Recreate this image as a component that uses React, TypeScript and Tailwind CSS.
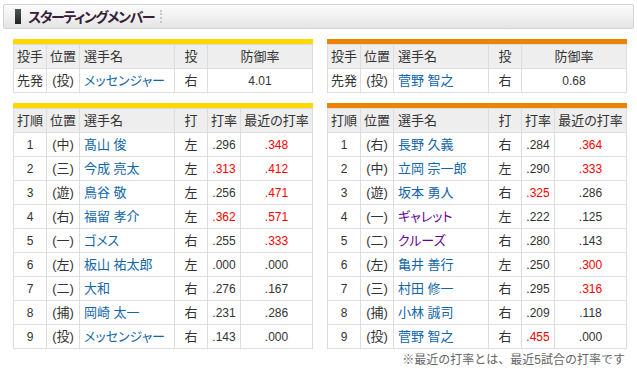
import React from "react";

interface Batter {
  order: number;
  pos: string;
  name: string;
  hand: string;
  avg: string;
  recent: string;
  avgHot?: boolean;
  recentHot?: boolean;
  foreign?: boolean;
}

interface Pitcher {
  pos: string;
  name: string;
  hand: string;
  era: string;
}

const left: Batter[] = [
  { order: 1, pos: "(中)", name: "髙山 俊", hand: "左", avg: ".296", recent: ".348", recentHot: true },
  { order: 2, pos: "(三)", name: "今成 亮太", hand: "左", avg: ".313", recent: ".412", avgHot: true, recentHot: true },
  { order: 3, pos: "(遊)", name: "鳥谷 敬", hand: "左", avg: ".256", recent: ".471", recentHot: true },
  { order: 4, pos: "(右)", name: "福留 孝介", hand: "左", avg: ".362", recent: ".571", avgHot: true, recentHot: true },
  { order: 5, pos: "(一)", name: "ゴメス", hand: "右", avg: ".255", recent: ".333", recentHot: true },
  { order: 6, pos: "(左)", name: "板山 祐太郎", hand: "左", avg: ".000", recent: ".000" },
  { order: 7, pos: "(二)", name: "大和", hand: "右", avg: ".276", recent: ".167" },
  { order: 8, pos: "(捕)", name: "岡崎 太一", hand: "右", avg: ".231", recent: ".286" },
  { order: 9, pos: "(投)", name: "メッセンジャー", hand: "右", avg: ".143", recent: ".000" },
];

const right: Batter[] = [
  { order: 1, pos: "(右)", name: "長野 久義", hand: "右", avg: ".284", recent: ".364", recentHot: true },
  { order: 2, pos: "(中)", name: "立岡 宗一郎", hand: "左", avg: ".290", recent: ".333", recentHot: true },
  { order: 3, pos: "(遊)", name: "坂本 勇人", hand: "右", avg: ".325", recent: ".286", avgHot: true },
  { order: 4, pos: "(一)", name: "ギャレット", hand: "左", avg: ".222", recent: ".125", foreign: true },
  { order: 5, pos: "(二)", name: "クルーズ", hand: "右", avg: ".280", recent: ".143", foreign: true },
  { order: 6, pos: "(左)", name: "亀井 善行", hand: "左", avg: ".250", recent: ".300", recentHot: true },
  { order: 7, pos: "(三)", name: "村田 修一", hand: "右", avg: ".295", recent: ".316", recentHot: true },
  { order: 8, pos: "(捕)", name: "小林 誠司", hand: "右", avg: ".209", recent: ".118" },
  { order: 9, pos: "(投)", name: "菅野 智之", hand: "右", avg: ".455", recent: ".000", avgHot: true },
];

const th = "border border-[#dddddd] bg-[#eeeeee] font-normal h-6 p-0";
const td = "border border-[#dddddd] bg-white h-6 p-0 text-center";

function PitcherTable({ p, bar }: { p: Pitcher; bar: string }) {
  return (
    <div className={`border-t-[5px] ${bar}`}>
      <table className="w-full border-collapse table-fixed">
        <colgroup>
          <col className="w-[33px]" />
          <col className="w-[33px]" />
          <col className="w-[95px]" />
          <col className="w-[33px]" />
          <col />
        </colgroup>
        <thead>
          <tr>
            <th className={th}>投手</th>
            <th className={th}>位置</th>
            <th className={`${th} text-left pl-[4px]`}>選手名</th>
            <th className={th}>投</th>
            <th className={th}>防御率</th>
          </tr>
        </thead>
        <tbody>
          <tr>
            <td className={td}>先発</td>
            <td className={td}>{p.pos}</td>
            <td className={`${td} !text-left pl-[4px] text-[#1166aa]`}>{p.name}</td>
            <td className={td}>{p.hand}</td>
            <td className={`${td} text-[12px]`}>{p.era}</td>
          </tr>
        </tbody>
      </table>
    </div>
  );
}

function BattingTable({ rows, bar }: { rows: Batter[]; bar: string }) {
  return (
    <div className={`border-t-[5px] ${bar}`}>
      <table className="w-full border-collapse table-fixed">
        <colgroup>
          <col className="w-[33px]" />
          <col className="w-[33px]" />
          <col className="w-[95px]" />
          <col className="w-[33px]" />
          <col className="w-[33px]" />
          <col />
        </colgroup>
        <thead>
          <tr>
            <th className={th}>打順</th>
            <th className={th}>位置</th>
            <th className={`${th} text-left pl-[4px]`}>選手名</th>
            <th className={th}>打</th>
            <th className={th}>打率</th>
            <th className={th}>最近の打率</th>
          </tr>
        </thead>
        <tbody>
          {rows.map((r) => (
            <tr key={r.order}>
              <td className={`${td} text-[12px]`}>{r.order}</td>
              <td className={td}>{r.pos}</td>
              <td
                className={`${td} !text-left pl-[4px] ${
                  r.foreign ? "text-[#660099]" : "text-[#1166aa]"
                }`}
              >
                {r.name}
              </td>
              <td className={td}>{r.hand}</td>
              <td className={`${td} text-[12px] ${r.avgHot ? "text-[#ff0000]" : ""}`}>{r.avg}</td>
              <td className={`${td} text-[12px] ${r.recentHot ? "text-[#ff0000]" : ""}`}>{r.recent}</td>
            </tr>
          ))}
        </tbody>
      </table>
    </div>
  );
}

export default function App() {
  return (
    <div className="w-[637px] h-[374px] bg-white pt-[4px] text-[13px] text-[#333333] font-['Liberation_Sans','Noto_Sans_CJK_JP',sans-serif] [font-feature-settings:'palt'] leading-none">
      {/* TITLE BAR */}
      <div className="mx-[3px] h-[25px] rounded-[2px] border border-[#d4d4d4] bg-gradient-to-b from-[#fbfbfb] via-[#f1f1f1] to-[#e4e4e4] flex items-center pl-[11px]">
        <span className="w-[6px] h-[15px] bg-gradient-to-b from-[#555555] to-[#222222]" />
        <span className="ml-[7px] text-[14px] font-bold tracking-[-1.4px] text-[#352038]">
          スターティングメンバー
        </span>
        <span className="ml-[6px] h-[13px] border-l-2 border-dotted border-[#c8c8c8]" />
      </div>

      {/* TABLES */}
      <div className="flex gap-[14px] pl-[13px] pr-[10px] mt-[10px]">
        <div className="w-[300px] flex flex-col gap-[10px]">
          <PitcherTable bar="border-[#ffd800]" p={{ pos: "(投)", name: "メッセンジャー", hand: "右", era: "4.01" }} />
          <BattingTable bar="border-[#ffd800]" rows={left} />
        </div>
        <div className="w-[300px] flex flex-col gap-[10px]">
          <PitcherTable bar="border-[#ee8500]" p={{ pos: "(投)", name: "菅野 智之", hand: "右", era: "0.68" }} />
          <BattingTable bar="border-[#ee8500]" rows={right} />
        </div>
      </div>

      {/* NOTE */}
      <p className="mt-[5px] pr-[12px] text-right text-[12px] text-[#666666] [font-feature-settings:normal]">
        ※最近の打率とは、最近5試合の打率です
      </p>
    </div>
  );
}
